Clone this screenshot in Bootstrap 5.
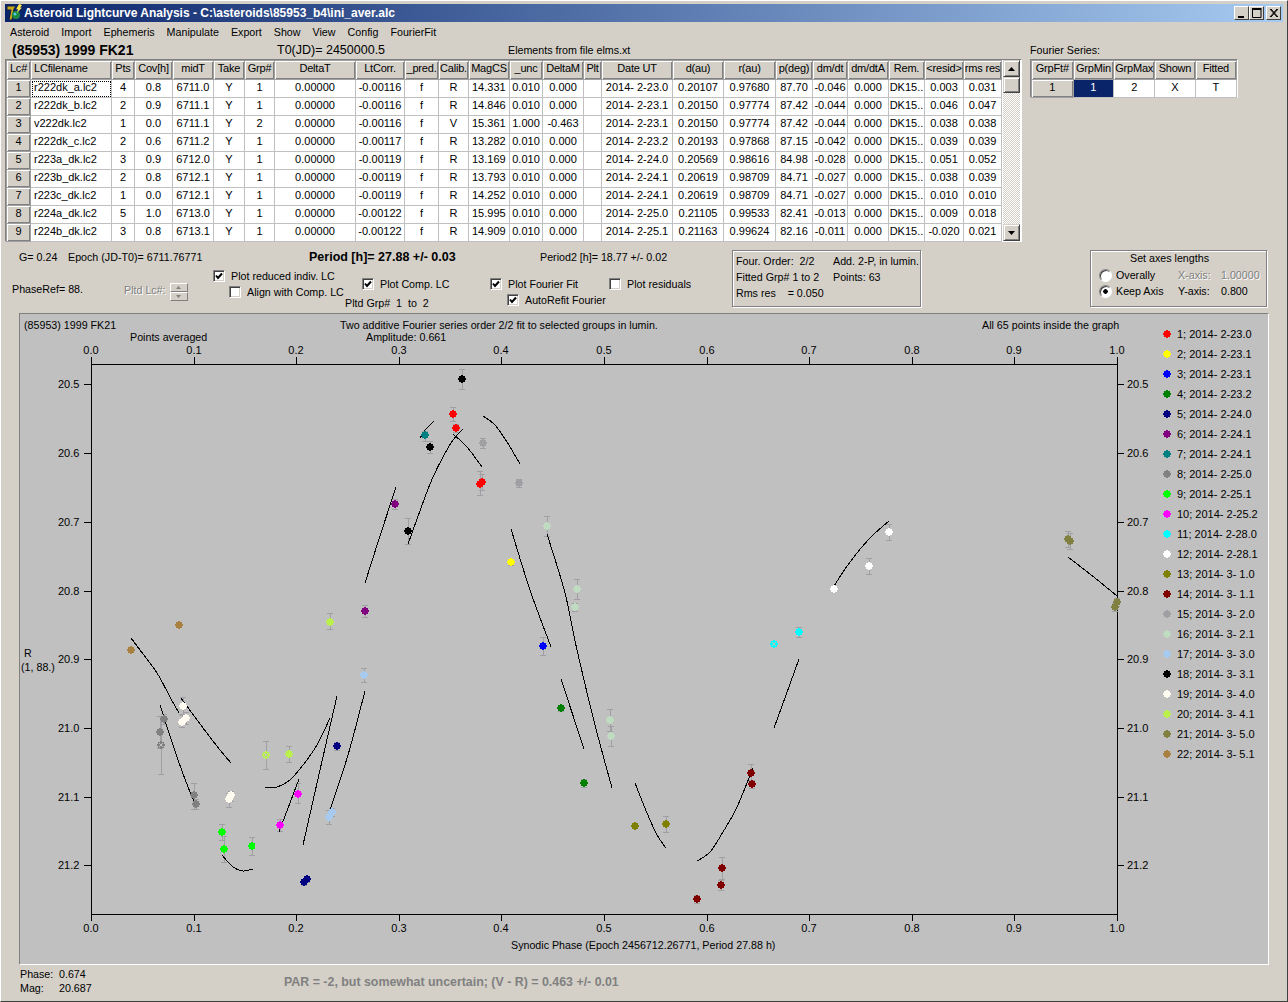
<!DOCTYPE html>
<html lang="en">
<head>
<meta charset="UTF-8">
<title>Asteroid Lightcurve Analysis</title>
<link href="https://cdn.jsdelivr.net/npm/bootstrap@5.3.3/dist/css/bootstrap.min.css" rel="stylesheet">
<style>
    html, body { margin: 0; height: 100%; background: #d4d0c8; overflow: hidden; }
    body { font-family: "Liberation Sans", Arial, sans-serif; font-size: 10.7px; color: #000; line-height: 14px; }

    /* window frame */
    .win { width: 1288px; height: 1002px; background: #d4d0c8; padding: 3px 4px 2px 4px; border-bottom: 1px solid #404040; border-right: 1px solid #404040; border-top: 1px solid #fff; border-left: 1px solid #fff; }
    .titlebar { height: 18px; background: linear-gradient(90deg, #0a246a, #a6caf0); color: #fff; font-weight: 700; font-size: 12px; padding: 0 2px 0 1px; }
    .logo { width: 17px; height: 18px; margin-right: 1px; }
    .capbtn { width: 15px; height: 14px; background: #d4d0c8; border: 1px solid; border-color: #fff #404040 #404040 #fff; }
    .capbtn svg { display: block; }
    .capbtn.close { margin-left: 2px; }
    .menubar { height: 19px; padding-left: 5px; gap: 12px; padding-top: 1px; }
    .obj-line { height: 18px; }
    .obj-name { font-size: 14px; font-weight: 700; width: 272px; padding-left: 7px; }
    .t0 { font-size: 12.5px; width: 231px; }
    .elms { width: 522px; }

    /* string grids */
    .grids { height: 186px; }
    .grid-wrap { width: 1017px; height: 183px; background: #fff; border: 1px solid; border-color: #808080 #fff #fff #808080; }
    .grid { table-layout: fixed; border-collapse: collapse; width: auto; margin: 0; background: #fff; font-size: 11px; }
    .grid th, .grid td { padding: 0; height: 18px; border: 1px solid #c0c0c0; font-weight: 400; text-align: center; white-space: nowrap; overflow: hidden; line-height: 15px; color: #000; background: #fff; }
    .grid th { height: 19px; letter-spacing: -.2px; }
    .grid th, .grid td.fixed { background: #d4d0c8; box-shadow: inset 1px 1px 0 #fff, inset -1px -1px 0 #808080; border: 1px solid #a0a0a0; }
    .grid td.lft { text-align: left; padding-left: 3px; }
    .grid td.cur { outline: 1px dotted #000; outline-offset: -2px; }
    .grid td.sel { background: #0a246a; color: #fff; }
    .grid th.lft { text-align: left; padding-left: 3px; }
    .vscroll { width: 17px; height: 181px; margin-right: 1px; background: repeating-conic-gradient(#fff 0 25%, #d4d0c8 0 50%) 0 0 / 2px 2px; }
    .sbtn { height: 17px; background: #d4d0c8; border: 1px solid; border-color: #d4d0c8 #404040 #404040 #d4d0c8; box-shadow: inset 1px 1px 0 #fff, inset -1px -1px 0 #808080; }
    .sbtn.thumb { height: 16px; }
    .fourier { width: 208px; margin-left: 8px; }
    .fourier-wrap { width: 208px; height: 39px; background: #d4d0c8; border: 1px solid; border-color: #808080 #fff #fff #808080; }

    /* middle strip with the checkboxes */
    .ctrl-strip { height: 68px; }
    .ctrl-left { width: 727px; }
    .line-top { height: 20px; padding-top: 5px; }
    .g { width: 49px; margin-left: 14px; }
    .epoch { width: 241px; }
    .period { width: 231px; font-size: 12.5px; font-weight: 700; }
    .ctrl-row { height: 44px; padding-left: 7px; margin-top: 3px; }
    .phase-ref { width: 112px; padding-top: 14px; }
    .pltd { width: 89px; padding-top: 15px; color: #808080; text-shadow: 1px 1px 0 #fff; gap: 4px; }
    .spin { width: 18px; height: 18px; }
    .spin i { display: flex; align-items: center; justify-content: center; height: 9px; background: #d4d0c8; border: 1px solid; border-color: #fff #808080 #808080 #fff; }
    .chk-a { width: 149px; }
    .chk-b { width: 128px; padding-top: 8px; }
    .chk-c { width: 119px; padding-top: 8px; }
    .chk-d { padding-top: 8px; }
    .ck { gap: 6px; height: 16px; }
    .ck.ind { margin-left: 16px; }
    .ck.ind2 { margin-left: 17px; }
    .box { width: 12px; height: 12px; background: #fff; border: 1px solid; border-color: #808080 #fff #fff #808080; box-shadow: inset 1px 1px 0 #404040, inset -1px -1px 0 #d4d0c8; flex: none; }
    .box svg { display: block; margin: 1px 0 0 1px; }
    .pg { margin-top: 4px; margin-left: -17px; }
    .etched { border: 1px solid #808080; box-shadow: 1px 1px 0 #fff, inset 1px 1px 0 #fff; white-space: nowrap; }
    .infobox { width: 189px; height: 57px; padding: 2px 3px; margin-top: 5px; line-height: 16px; }
    .infobox span { display: inline-block; width: 97px; }
    .axesbox { width: 177px; height: 57px; padding: 0 0 0 8px; margin-top: 5px; margin-left: 169px; }
    .axesbox h6 { font: inherit; line-height: 14px; margin: 0 0 2px 31px; }
    .axrow { height: 16px; }
    .rb { width: 13px; height: 13px; border-radius: 50%; background: #fff; border: 1px solid; border-color: #808080 #fff #fff #808080; box-shadow: inset 1px 1px 0 #404040; flex: none; }
    .rb.on { background: radial-gradient(circle, #000 0 2px, #fff 2.5px); }
    .rbw { width: 79px; gap: 4px; flex: none; }
    .axlab { width: 43px; flex: none; }
    .off { color: #808080; text-shadow: 1px 1px 0 #fff; }

    /* plot panel */
    .plot { width: 1250px; height: 652px; margin-left: 14px; background: #c0c0c0; border: 1px solid; border-color: #808080 #fff #fff #808080; }
    .plot svg { display: block; font-family: "Liberation Sans", Arial, sans-serif; font-size: 10.7px; }
    .plot text { fill: #000; }
    .plot text.num { font-size: 11px; }

    .status { padding-left: 15px; height: 30px; padding-top: 2px; }
    .status .phase { width: 264px; }
    .status .phase span { display: inline-block; width: 39px; }
    .par { color: #808080; font-weight: 700; font-size: 12.4px; padding-top: 8px; }
</style>
</head>
<body>
<div class="win d-flex flex-column">

    <div class="titlebar d-flex align-items-center">
        <svg class="logo" viewBox="0 0 17 18">
            <path d="M1 2h9L8 5 6 16H3L5 6H1z" fill="#c8a818" stroke="#10204a"/>
            <circle cx="10" cy="11" r="4" fill="#1c8a44"/>
            <circle cx="9" cy="10" r="1.500" fill="#58c8e0"/>
            <path d="M13 0l3 1-2 3 2-.5L11 9l1-4-2 .5z" fill="#ffe84a"/>
        </svg>
        <span class="flex-grow-1">Asteroid Lightcurve Analysis - C:\asteroids\85953_b4\ini_aver.alc</span>
        <div class="capbtn"><svg width="13" height="12"><rect x="3" y="9" width="6" height="2"/></svg></div>
        <div class="capbtn"><svg width="13" height="12"><path d="M2 1.500h9M2 2.500h9M2.500 1v9.500h8.500V1" fill="none" stroke="#000"/></svg></div>
        <div class="capbtn close"><svg width="13" height="12"><path d="M3 2l7 8M4 2l7 8M10 2l-7 8M11 2l-7 8" stroke="#000"/></svg></div>
    </div>

    <div class="menubar d-flex align-items-center">
        <span>Asteroid</span><span>Import</span><span>Ephemeris</span><span>Manipulate</span><span>Export</span><span>Show</span><span>View</span><span>Config</span><span>FourierFit</span>
    </div>

    <div class="obj-line d-flex align-items-center">
        <span class="obj-name">(85953) 1999 FK21</span>
        <span class="t0">T0(JD)= 2450000.5</span>
        <span class="elms">Elements from file elms.xt</span>
        <span>Fourier Series:</span>
    </div>

    <div class="grids d-flex">
        <div class="grid-wrap d-flex">
            <table class="table grid" id="mainGrid"></table>
            <div class="vscroll ms-auto d-flex flex-column justify-content-between">
                <div>
                    <div class="sbtn d-flex align-items-center justify-content-center"><svg width="7" height="4"><path d="M3.500 0L7 4H0z"/></svg></div>
                    <div class="sbtn thumb"></div>
                </div>
                <div class="sbtn d-flex align-items-center justify-content-center"><svg width="7" height="4"><path d="M0 0h7L3.500 4z"/></svg></div>
            </div>
        </div>
        <div class="fourier">
            <div class="fourier-wrap">
                <table class="table grid">
                    <colgroup><col width="42"><col width="41"><col width="41"><col width="41"><col width="42"></colgroup>
                    <tr><th>GrpFt#</th><th>GrpMin</th><th>GrpMax</th><th>Shown</th><th>Fitted</th></tr>
                    <tr><td class="fixed">1</td><td class="sel">1</td><td>2</td><td>X</td><td>T</td></tr>
                </table>
            </div>
        </div>
    </div>

    <div class="ctrl-strip d-flex">
        <div class="ctrl-left">
            <div class="line-top d-flex">
                <span class="g">G= 0.24</span>
                <span class="epoch">Epoch (JD-T0)= 6711.76771</span>
                <span class="period">Period [h]= 27.88 +/- 0.03</span>
                <span>Period2 [h]= 18.77 +/- 0.02</span>
            </div>
            <div class="ctrl-row d-flex">
                <div class="phase-ref">PhaseRef= 88.</div>
                <div class="pltd d-flex">
                    <span>Pltd Lc#:</span>
                    <div class="spin">
                        <i><svg width="5" height="3"><path d="M2.500 0L5 3H0z" fill="#808080"/></svg></i>
                        <i><svg width="5" height="3"><path d="M0 0h5L2.500 3z" fill="#808080"/></svg></i>
                    </div>
                </div>
                <div class="chk-a">
                    <div class="ck d-flex align-items-center"><div class="box"><svg width="8" height="8"><path d="M1 3.500l2 2.500L7 1.500" fill="none" stroke="#000" stroke-width="2"/></svg></div>Plot reduced indiv. LC</div>
                    <div class="ck ind d-flex align-items-center"><div class="box"></div>Align with Comp. LC</div>
                </div>
                <div class="chk-b">
                    <div class="ck d-flex align-items-center"><div class="box"><svg width="8" height="8"><path d="M1 3.500l2 2.500L7 1.500" fill="none" stroke="#000" stroke-width="2"/></svg></div>Plot Comp. LC</div>
                    <div class="pg">Pltd Grp#&nbsp; 1 &nbsp;to&nbsp; 2</div>
                </div>
                <div class="chk-c">
                    <div class="ck d-flex align-items-center"><div class="box"><svg width="8" height="8"><path d="M1 3.500l2 2.500L7 1.500" fill="none" stroke="#000" stroke-width="2"/></svg></div>Plot Fourier Fit</div>
                    <div class="ck ind2 d-flex align-items-center"><div class="box"><svg width="8" height="8"><path d="M1 3.500l2 2.500L7 1.500" fill="none" stroke="#000" stroke-width="2"/></svg></div>AutoRefit Fourier</div>
                </div>
                <div class="chk-d">
                    <div class="ck d-flex align-items-center"><div class="box"></div>Plot residuals</div>
                </div>
            </div>
        </div>
        <div class="infobox etched">
            <div><span>Four. Order:&nbsp; 2/2</span>Add. 2-P, in lumin.</div>
            <div><span>Fitted Grp# 1 to 2</span>Points: 63</div>
            <div>Rms res &nbsp;&nbsp; = 0.050</div>
        </div>
        <div class="axesbox etched">
            <h6>Set axes lengths</h6>
            <div class="axrow d-flex align-items-center"><div class="rbw d-flex align-items-center"><div class="rb"></div>Overally</div><span class="axlab off">X-axis:</span><span class="off">1.00000</span></div>
            <div class="axrow d-flex align-items-center"><div class="rbw d-flex align-items-center"><div class="rb on"></div>Keep Axis</div><span class="axlab">Y-axis:</span><span>0.800</span></div>
        </div>
    </div>

    <div class="plot"><svg id="chart" width="1248" height="650" shape-rendering="crispEdges"></svg></div>

    <div class="status d-flex">
        <div class="phase">
            <div><span>Phase:</span>0.674</div>
            <div><span>Mag:</span>20.687</div>
        </div>
        <div class="par">PAR = -2, but somewhat uncertain; (V - R) = 0.463 +/- 0.01</div>
    </div>
</div>

<script>
    // grid ------------------------------------------------------------
    const colWidths = [24,81,23,38,41,31,30,81,49,34,30,41,33,41,18,71,51,52,37,35,41,36,39,38];
    const heads = ["Lc#","LCfilename","Pts","Cov[h]","midT","Take","Grp#","DeltaT","LtCorr.","_pred.","Calib.","MagCS","_unc","DeltaM","Plt","Date UT","d(au)","r(au)","p(deg)","dm/dt","dm/dtA","Rem.","<resid>","rms res"];
    const rows = [
        "r222dk_a.lc2|4|0.8|6711.0|1|-0.00116|R|14.331|0.010|0.000|2014- 2-23.0|0.20107|0.97680|87.70|-0.046|0.003|0.031",
        "r222dk_b.lc2|2|0.9|6711.1|1|-0.00116|R|14.846|0.010|0.000|2014- 2-23.1|0.20150|0.97774|87.42|-0.044|0.046|0.047",
        "v222dk.lc2|1|0.0|6711.1|2|-0.00116|V|15.361|1.000|-0.463|2014- 2-23.1|0.20150|0.97774|87.42|-0.044|0.038|0.038",
        "r222dk_c.lc2|2|0.6|6711.2|1|-0.00117|R|13.282|0.010|0.000|2014- 2-23.2|0.20193|0.97868|87.15|-0.042|0.039|0.039",
        "r223a_dk.lc2|3|0.9|6712.0|1|-0.00119|R|13.169|0.010|0.000|2014- 2-24.0|0.20569|0.98616|84.98|-0.028|0.051|0.052",
        "r223b_dk.lc2|2|0.8|6712.1|1|-0.00119|R|13.793|0.010|0.000|2014- 2-24.1|0.20619|0.98709|84.71|-0.027|0.038|0.039",
        "r223c_dk.lc2|1|0.0|6712.1|1|-0.00119|R|14.252|0.010|0.000|2014- 2-24.1|0.20619|0.98709|84.71|-0.027|0.010|0.010",
        "r224a_dk.lc2|5|1.0|6713.0|1|-0.00122|R|15.995|0.010|0.000|2014- 2-25.0|0.21105|0.99533|82.41|-0.013|0.009|0.018",
        "r224b_dk.lc2|3|0.8|6713.1|1|-0.00122|R|14.909|0.010|0.000|2014- 2-25.1|0.21163|0.99624|82.16|-0.011|-0.020|0.021"
    ];
    let html = "<colgroup>" + colWidths.map(w => `<col width="${w}">`).join("") + "</colgroup><tr>";
    heads.forEach((h, i) => {
        html += `<th class="${i == 1 ? "lft" : ""}">${h.replace("<", "&lt;").replace(">", "&gt;")}</th>`;
    });
    html += "</tr>";
    rows.forEach((r, n) => {
        const c = r.split("|");
        const cells = [n + 1, c[0], c[1], c[2], c[3], "Y", c[4], "0.00000", c[5], "f", c[6], c[7], c[8], c[9], "", c[10], c[11], c[12], c[13], c[14], "0.000", "DK15..", c[15], c[16]];
        html += "<tr>" + cells.map((v, i) => {
            let cls = "";
            if (i == 0) cls = "fixed";
            if (i == 1) cls = n == 0 ? "lft cur" : "lft";
            if (i == 11) cls = "lft";
            return `<td class="${cls}">${v}</td>`;
        }).join("") + "</tr>";
    });
    document.getElementById("mainGrid").innerHTML = html;

    // chart -----------------------------------------------------------
    const OX = 20, OY = 314;   // screen position of the panel's inner corner
    const colors = ["#ff0000","#ffff00","#0000ff","#008000","#000080","#800080","#008080","#808080","#00ff00","#ff00ff","#00ffff","#ffffff","#808000","#800000","#a0a0a4","#c0dcc0","#a6caf0","#000000","#fffbf0","#b9f04a","#808040","#a88040"];
    const dates = ["2-23.0","2-23.1","2-23.1","2-23.2","2-24.0","2-24.1","2-24.1","2-25.0","2-25.1","2-25.2","2-28.0","2-28.1","3- 1.0","3- 1.1","3- 2.0","3- 2.1","3- 3.0","3- 3.1","3- 4.0","3- 4.1","3- 5.0","3- 5.1"];
    // group, x, y, error top, error bottom (screen px)
    const pts = [
        [22,131,650,648,652],[22,179,625,623,627],
        [20,330,622,613,629],[6,365,611,605,617],[6,395,504,499,509],[18,408,531,518,544],
        [7,425,435,431,441],[18,430,447,441,453],[18,462,379,369,389],[1,453,414,407,421],[1,456,428,424,432],
        [15,483,443,438,448],[15,519,483,479,487],[1,480,484,471,495],[1,482,482,474,490],
        [16,547,526,516,536],[2,511,562,559,565],[3,543,646,637,655],[16,577,589,579,599],[16,575,607,603,611],
        [4,561,708,705,711],[4,584,783,779,787],[16,610,720,709,731],[16,611,736,726,746],
        [13,635,826,824,828],[13,666,824,816,832],
        [14,751,773,764,782],[14,752,784,780,788],[14,722,868,857,879],[14,721,885,880,890],[14,697,899,895,903],
        [11,774,644,642,646],[11,799,632,627,637],[12,834,589,587,591],[12,869,566,558,574],[12,889,532,524,540],
        [21,1068,539,531,547],[21,1070,541,533,549],[21,1117,602,598,606],[21,1115,607,603,611],
        [8,164,719,714,724],[8,160,732,716,748],[8,161,745,716,774],[8,194,795,783,809],[8,196,804,799,809],
        [19,183,706,697,715],[19,186,718,712,724],[19,182,722,714,727],[19,231,795,791,801],[19,229,799,793,807],
        [20,266,755,741,769],[20,289,754,746,762],
        [9,222,832,824,840],[9,224,849,836,862],[9,252,846,837,855],
        [10,298,794,783,803],[10,280,825,819,831],
        [5,337,746,742,750],[5,307,879,876,882],[5,304,882,879,885],
        [17,364,675,668,682],[17,332,812,808,816],[17,329,817,810,824]
    ];
    // points drawn with a little cross through them
    const crossed = [[161,745],[266,755],[774,644]];
    // fit segments, screen px
    const curves = [
        [[131,638],[140,650],[157,673],[170,697],[179,713]],
        [[181,698],[203,728],[220,750],[231,763]],
        [[160,705],[177,757],[190,792],[196,805]],
        [[222,855],[233,867],[243,871],[253,869]],
        [[265,787],[277,787],[290,780],[303,765],[317,745],[330,718]],
        [[299,779],[279,832]],
        [[337,696],[320,770],[303,845]],
        [[365,691],[348,755],[329,813]],
        [[396,487],[380,536],[365,583]],
        [[463,429],[453,440],[443,457],[433,477],[425,497],[408,544]],
        [[420,438],[426,429],[434,421]],
        [[453,434],[467,447],[482,467]],
        [[483,416],[495,425],[507,442],[520,464]],
        [[511,529],[530,590],[551,647]],
        [[547,534],[565,593],[577,650],[595,725],[612,788]],
        [[561,679],[584,749]],
        [[635,783],[647,813],[657,835],[666,848]],
        [[697,861],[710,852],[723,832],[737,807],[753,768]],
        [[774,728],[786,695],[799,659]],
        [[834,586],[850,562],[870,538],[889,521]],
        [[1068,557],[1095,578],[1117,596]]
    ];
    const sx = x => x - OX, sy = y => y - OY;
    const txt = (x, y, s, a) => `<text x="${sx(x)}" y="${sy(y)}" ${a || ""}>${s}</text>`;
    const line = (x1, y1, x2, y2, c) => `<line x1="${sx(x1)}" y1="${sy(y1)}" x2="${sx(x2)}" y2="${sy(y2)}" stroke="${c || "#000"}"/>`;

    // catmull-rom through the fit points, so the curves are not polygons
    function smooth(c) {
        const p = c.map(q => [sx(q[0]), sy(q[1])]);
        let d = `M${p[0][0]} ${p[0][1]}`;
        for (let i = 0; i < p.length - 1; i++) {
            const a = p[i - 1] || p[i], b = p[i], e = p[i + 1], f = p[i + 2] || e;
            d += `C${b[0] + (e[0] - a[0]) / 6} ${b[1] + (e[1] - a[1]) / 6} ${e[0] - (f[0] - b[0]) / 6} ${e[1] - (f[1] - b[1]) / 6} ${e[0]} ${e[1]}`;
        }
        return `<path d="${d}" fill="none" stroke="#000"/>`;
    }

    let svg = "";
    svg += txt(24, 329, "(85953) 1999 FK21");
    svg += txt(340, 329, "Two additive Fourier series order 2/2 fit to selected groups in lumin.");
    svg += txt(982, 329, "All 65 points inside the graph");
    svg += txt(130, 341, "Points averaged");
    svg += txt(366, 341, "Amplitude: 0.661");
    svg += txt(511, 949, "Synodic Phase (Epoch 2456712.26771, Period 27.88 h)");
    svg += txt(24, 657, "R");
    svg += txt(21, 671, "(1, 88.)");

    // frame and axes
    svg += `<rect x="${sx(91)}" y="${sy(364)}" width="1026" height="550" fill="none" stroke="#000"/>`;
    for (let i = 0; i <= 10; i++) {
        const x = Math.round(91 + i * 102.6), label = (i / 10).toFixed(1);
        svg += line(x, 357, x, 364) + line(x, 914, x, 921);
        svg += txt(x, 354, label, 'text-anchor="middle" class="num"') + txt(x, 932, label, 'text-anchor="middle" class="num"');
    }
    for (let i = 0; i < 8; i++) {
        const y = Math.round(384.4 + i * 68.7), label = (20.5 + i / 10).toFixed(1);
        svg += line(84, y, 91, y) + line(1117, y, 1124, y);
        svg += txt(58, y + 4, label, 'class="num"') + txt(1127, y + 4, label, 'class="num"');
    }

    // error bars under the points
    pts.forEach(p => {
        svg += line(p[1], p[3], p[1], p[4], "#a0a0a4");
        svg += line(p[1] - 3, p[3], p[1] + 3, p[3], "#a0a0a4") + line(p[1] - 3, p[4], p[1] + 3, p[4], "#a0a0a4");
    });
    curves.forEach(c => { svg += smooth(c); });
    pts.forEach(p => {
        svg += `<circle cx="${sx(p[1])}" cy="${sy(p[2])}" r="3.600" fill="${colors[p[0] - 1]}"/>`;
    });
    crossed.forEach(p => {
        svg += line(p[0] - 2, p[1] - 2, p[0] + 2, p[1] + 2, "#c0c0c0") + line(p[0] + 2, p[1] - 2, p[0] - 2, p[1] + 2, "#c0c0c0");
    });

    // legend
    colors.forEach((c, i) => {
        const y = 334 + i * 20;
        svg += `<circle cx="${sx(1167)}" cy="${sy(y)}" r="3.600" fill="${c}"/>`;
        svg += txt(1177, y + 4, `${i + 1}; 2014- ${dates[i]}`, 'class="num"');
    });
    document.getElementById("chart").innerHTML = svg;
</script>
<script src="https://cdn.jsdelivr.net/npm/bootstrap@5.3.3/dist/js/bootstrap.bundle.min.js"></script>
</body>
</html>
